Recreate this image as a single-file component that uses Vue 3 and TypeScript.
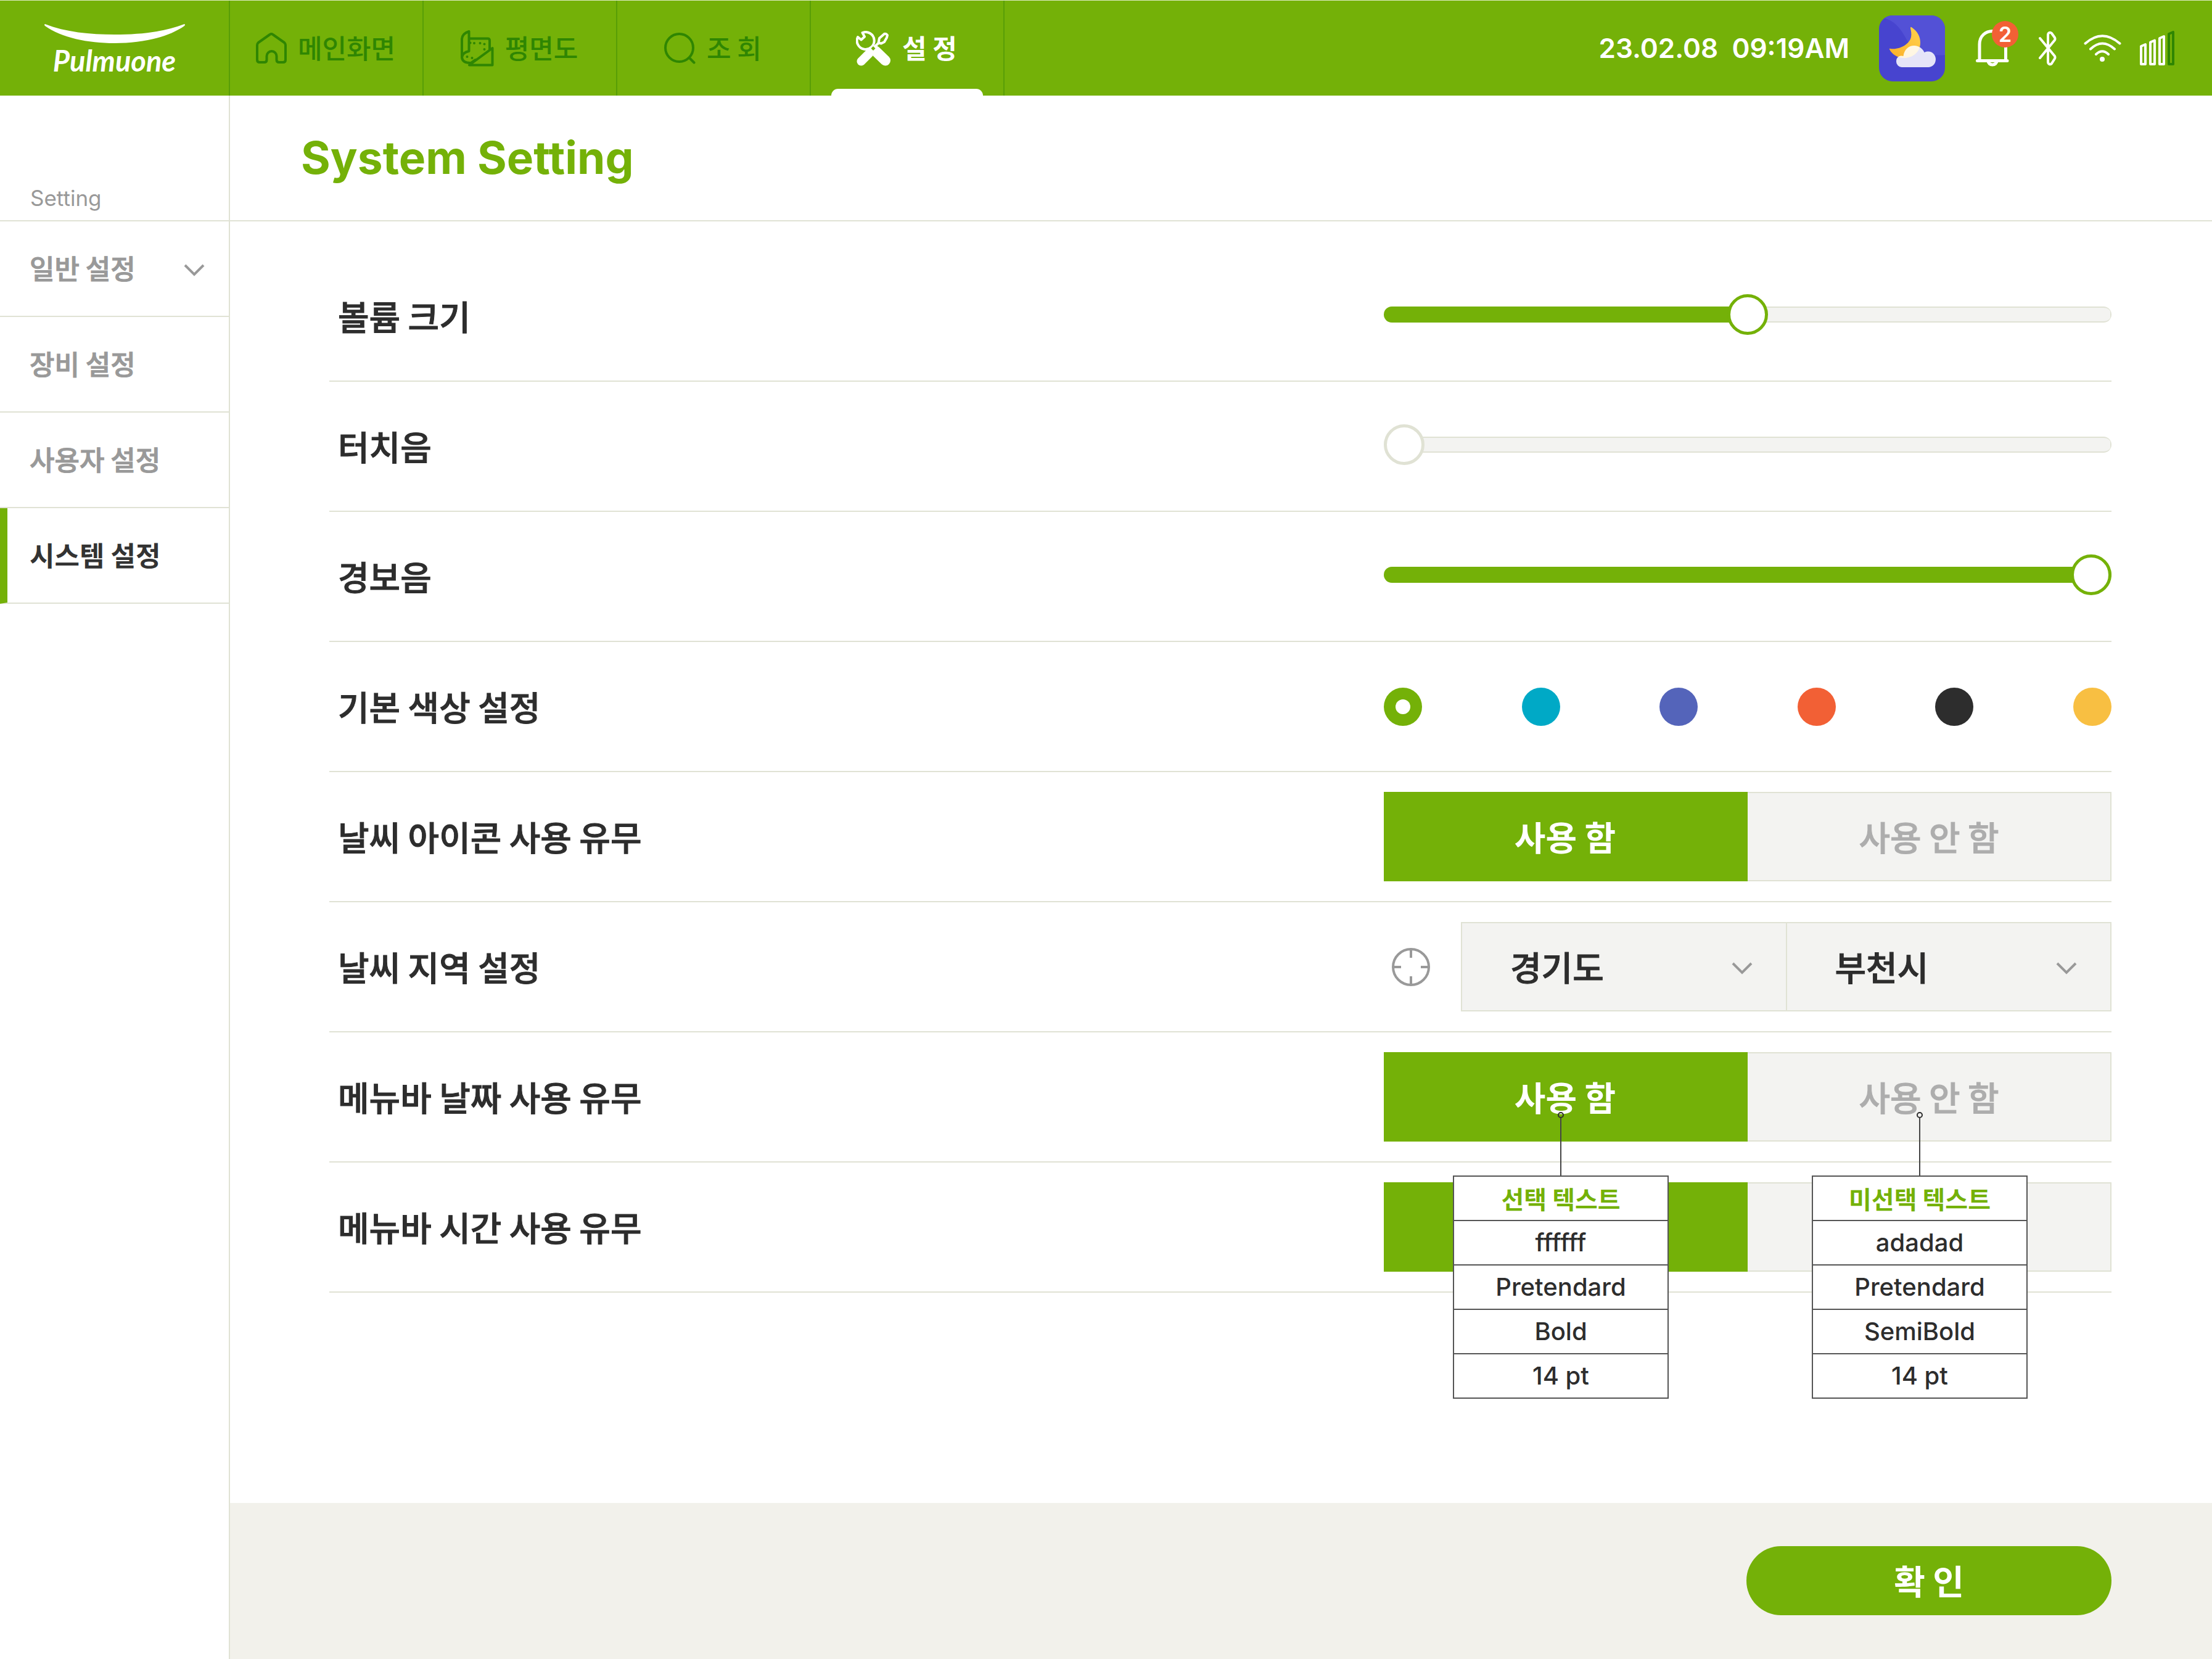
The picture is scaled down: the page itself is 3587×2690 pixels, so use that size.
<script setup lang="ts">
import { reactive, ref } from 'vue'

type Choice = 'on' | 'off'

interface SliderRow {
  id: string
  label: string
}
interface Callout {
  title: string
  specs: string[]
}

const sliders: SliderRow[] = [
  { id: 'volume', label: '볼륨 크기' },
  { id: 'touch', label: '터치음' },
  { id: 'alarm', label: '경보음' },
]
const levels = reactive<Record<string, number>>({ volume: 50, touch: 0, alarm: 100 })

const colors = ['#74b108', '#00a9c6', '#5464ba', '#f26035', '#2d2d2d', '#f8bf42']
const colorNames = ['초록', '청록', '남색', '주황', '검정', '노랑']
const color = ref(colors[0])

const choices: { value: Choice; label: string }[] = [
  { value: 'on', label: '사용 함' },
  { value: 'off', label: '사용 안 함' },
]
const toggles = reactive<Record<string, Choice>>({ weather: 'on', date: 'on', time: 'on' })

// The notes hang from the date row and cover the time row's captions.
const menubarRows = [
  { id: 'date', label: '메뉴바 날짜 사용 유무', covered: false },
  { id: 'time', label: '메뉴바 시간 사용 유무', covered: true },
]

const province = ref('경기도')
const city = ref('부천시')

const callouts: Callout[] = [
  { title: '선택 텍스트', specs: ['ffffff', 'Pretendard', 'Bold', '14 pt'] },
  { title: '미선택 텍스트', specs: ['adadad', 'Pretendard', 'SemiBold', '14 pt'] },
]

const sideItems = [
  { label: '일반 설정', expandable: true },
  { label: '장비 설정' },
  { label: '사용자 설정' },
  { label: '시스템 설정', active: true },
]
</script>

<template>
  <div class="app">
    <header class="topbar">
      <a class="logo" href="#" aria-label="Pulmuone">
        <svg class="smile" viewBox="0 0 228 31" width="228" height="31">
          <path d="M1 0C34 13 74 17 114 17S194 13 227 0q2 1 0 3C200 22 158 31 114 31S28 22 1 3q-2-2 0-3z" fill="#fff" />
        </svg>
        <span>Pulmuone</span>
      </a>
      <nav class="tabs">
        <a class="tab" href="#">
          <svg viewBox="0 0 50 50" width="50" height="50" class="line">
            <path d="M17.500 44V38a8 8 0 0 1 16 0v6q0 4 4 4H44q4 0 4-4V20q0-2-2-4L27.500 3q-2.500-2-5 0L4 16q-2 2-2 4v24q0 4 4 4h7.500q4 0 4-4z" />
          </svg>
          <span>메인화면</span>
        </a>
        <a class="tab" href="#">
          <svg viewBox="0 0 54 59" width="54" height="59" class="line">
            <path d="M2 44V14Q3 5 13.500 2V34Q3 36 2 44Q3 53 15 53M13.500 13.500H44Q47 13.500 47 17V31M51.500 29V56.500H14zM17 53L24 48" />
            <g class="dots">
              <circle cx="15.500" cy="20.500" r="2" /><circle cx="22" cy="21" r="2" /><circle cx="31.500" cy="21" r="2" />
              <circle cx="38.500" cy="22.500" r="2" /><circle cx="38.500" cy="31" r="2" />
              <circle cx="10.500" cy="43" r="2" /><circle cx="18.500" cy="45" r="2" />
            </g>
          </svg>
          <span>평면도</span>
        </a>
        <a class="tab" href="#">
          <svg viewBox="0 0 51 51" width="51" height="51" class="line">
            <circle cx="24.500" cy="24.500" r="22.500" />
            <path d="M41 41l7.500 7.500" />
          </svg>
          <span>조 회</span>
        </a>
        <a class="tab active" href="#" aria-current="page">
          <svg viewBox="0 0 57 57" width="57" height="57" class="line">
            <path d="M3 10L8.500 14.500L14 9.500L10.500 3A14 14 0 1 1 3 10z" />
            <path d="M38 12L46 5Q49 4 51 7L50 11L46 18L41 20.500L36.500 19.500zM36.500 20L30 26" />
            <path d="M25 33L8.500 49.500" stroke-width="14" />
            <path d="M32 33L47.500 48" stroke-width="17" />
            <path d="M28 23.500l5.500 5l-5.500 5.500l-5.500-5.500z" class="solid" />
            <path d="M28 25l3.500 3.500l-3.500 3.500l-3.500-3.500z" class="gap" />
            <path d="M21 60l6.500-20l8 20z" class="gap" />
          </svg>
          <span>설 정</span>
        </a>
      </nav>
      <div class="status">
        <time>23.02.08&nbsp; 09:19AM</time>
        <svg class="weather" viewBox="0 0 107 107" width="107" height="107" aria-label="구름 조금">
          <defs>
            <linearGradient id="moon" x1="1" y1="0" x2="0" y2="1">
              <stop offset="0" stop-color="#ffd34b" />
              <stop offset="1" stop-color="#fcae2a" />
            </linearGradient>
            <clipPath id="tile"><rect width="107" height="107" rx="22" /></clipPath>
          </defs>
          <g clip-path="url(#tile)">
            <rect width="107" height="107" fill="#4744cf" />
            <path d="M8 4C42 14 42 48 60 56C74 62 86 66 107 64V0H8z" fill="#5351d6" />
          </g>
          <path d="M52.500 19C63 26 67 35 67 44C67 60 54 69 41 69C30 69 21 63 17 55Q16 53 19 54C34 56 50 46 52 35C53 30 52 25 51 21Q51 18 52.500 19z" fill="url(#moon)" />
          <path d="M37 84a9 9 0 0 1-9-9V74.500a8.500 8.500 0 0 1 11.500-8.500C41 55 48 49 57 49C65 49 71 54 73.500 60C84 55 92 63 92 71C92 79 86 84 80 84z" fill="#fff" fill-opacity="0.860" />
        </svg>
        <button class="bell" type="button" aria-label="알림">
          <svg viewBox="0 0 54 60" width="54" height="60" class="line thick">
            <path d="M6 50V24C6 10 16 2.500 27 2.500S48.500 10 48.500 24V50M2.500 50.500H51M20 51a7 6 0 0 0 14 0" />
          </svg>
          <span class="badge">2</span>
        </button>
        <svg class="line bt" viewBox="0 0 29 57" width="29" height="57">
          <path d="M2 12L26 41q1 2 0 4l-5 8q-2 2-4 1q-2-1-2-4V7q0-3 2-4q2-1 4 1l5 7q1 2 0 4L2 44" />
        </svg>
        <svg class="line wifi" viewBox="0 0 61 45" width="61" height="45">
          <path d="M2.500 14.500Q30-10 58.500 14.500M11 23.500Q30 5.500 50 23.500M20 32Q30 22.500 40 32" />
          <circle cx="30" cy="40" r="4" class="solid" />
        </svg>
        <svg class="line signal" viewBox="0 0 58 56" width="58" height="56">
          <path d="M3 25l7-3v32H3zM18 18.500l7-3V54H18zM33 12l7-3v45H33z" />
          <path d="M48 5l7-3v52H48z" class="off" />
        </svg>
      </div>
    </header>

    <div class="body">
      <aside class="side">
        <h2>Setting</h2>
        <nav>
          <a v-for="item in sideItems" :key="item.label" href="#" :class="{ active: item.active }">
            <span>{{ item.label }}</span>
            <svg v-if="item.expandable" class="chevron" viewBox="0 0 34 20" width="34" height="20"><path d="M2 2l15 15L32 2" /></svg>
          </a>
        </nav>
      </aside>

      <main class="main">
        <h1>System Setting</h1>

        <form class="rows" @submit.prevent>
          <div v-for="row in sliders" :key="row.id" class="row slider-row">
            <label class="name" :for="row.id">{{ row.label }}</label>
            <input
              :id="row.id"
              v-model.number="levels[row.id]"
              class="slider"
              :class="{ empty: levels[row.id] === 0 }"
              type="range"
              min="0"
              max="100"
              :style="{ '--fill': levels[row.id] + '%' }"
            />
          </div>

          <div class="row">
            <span class="name">기본 색상 설정</span>
            <div class="palette" role="radiogroup" aria-label="기본 색상 설정">
              <input
                v-for="(c, i) in colors"
                :key="c"
                v-model="color"
                type="radio"
                name="color"
                :value="c"
                :aria-label="colorNames[i]"
                :style="{ backgroundColor: c }"
              />
            </div>
          </div>

          <div class="row">
            <span class="name">날씨 아이콘 사용 유무</span>
            <div class="segment" role="radiogroup" aria-label="날씨 아이콘 사용 유무">
              <label v-for="c in choices" :key="c.value" :class="{ on: toggles.weather === c.value }">
                <input v-model="toggles.weather" type="radio" name="weather" :value="c.value" />
                {{ c.label }}
              </label>
            </div>
          </div>

          <div class="row">
            <span class="name">날씨 지역 설정</span>
            <div class="region">
              <button class="locate" type="button" aria-label="현재 위치">
                <svg viewBox="0 0 62 62" width="62" height="62">
                  <circle cx="31" cy="31" r="29" />
                  <path d="M31 2v14M31 60V46M2 31h13M60 31H47" />
                </svg>
              </button>
              <div class="selects">
                <div class="select">
                  <select v-model="province" aria-label="시도"><option>경기도</option></select>
                  <svg class="chevron" viewBox="0 0 34 20" width="34" height="20"><path d="M2 2l15 15L32 2" /></svg>
                </div>
                <div class="select">
                  <select v-model="city" aria-label="시군구"><option>부천시</option></select>
                  <svg class="chevron" viewBox="0 0 34 20" width="34" height="20"><path d="M2 2l15 15L32 2" /></svg>
                </div>
              </div>
            </div>
          </div>

          <div v-for="row in menubarRows" :key="row.id" class="row">
            <span class="name">{{ row.label }}</span>
            <div class="segment" role="radiogroup" :aria-label="row.label">
              <label v-for="c in choices" :key="c.value" :class="{ on: toggles[row.id] === c.value }">
                <input v-model="toggles[row.id]" type="radio" :name="row.id" :value="c.value" :aria-label="c.label" />
                <template v-if="!row.covered">{{ c.label }}</template>
              </label>
              <div v-if="row.id === 'date'" class="callouts">
                <div v-for="note in callouts" :key="note.title" class="callout">
                  <i class="pin"></i>
                  <i class="stem"></i>
                  <table>
                    <thead>
                      <tr><th scope="col">{{ note.title }}</th></tr>
                    </thead>
                    <tbody>
                      <tr v-for="spec in note.specs" :key="spec"><td>{{ spec }}</td></tr>
                    </tbody>
                  </table>
                </div>
              </div>
            </div>
          </div>
        </form>

        <footer class="footer">
          <button class="confirm" type="button">확 인</button>
        </footer>
      </main>
    </div>
  </div>
</template>

<style>
body {
  margin: 0;
  background: #fff;
}
</style>

<style scoped>
.app {
  --green: #74b108;
  --deep: #2f8602;
  --rule: #e0e2d4;
  --ink: #2d2d2d;
  --mute: #999;
  --panel: #f3f3f1;
  display: flex;
  flex-direction: column;
  min-height: 100vh;
  font-family: "Noto Sans CJK KR", "Noto Sans", sans-serif;
  color: var(--ink);
}
*,
*::before,
*::after {
  box-sizing: border-box;
}
a {
  color: inherit;
  text-decoration: none;
}
button {
  padding: 0;
  border: 0;
  background: none;
  font: inherit;
  color: inherit;
}
svg {
  display: block;
  flex: none;
}
.line {
  fill: none;
  stroke: currentColor;
  stroke-width: 4;
  stroke-linecap: round;
  stroke-linejoin: round;
}
.thick {
  stroke-width: 5;
}
.line .dots,
.line .solid {
  fill: currentColor;
  stroke: none;
}
.line .gap {
  fill: var(--green);
  stroke: none;
}

/* top bar */
.topbar {
  display: flex;
  height: 155px;
  border-top: 1px solid #dcebc2;
  background: var(--green);
  color: #fff;
}
.logo {
  display: flex;
  flex-direction: column;
  align-items: center;
  width: 373px;
  padding-top: 38px;
  border-right: 2px solid #589e06;
  font: italic 700 47px/56px Lato, "Open Sans", sans-serif;
}
.tabs {
  display: flex;
}
.tab {
  position: relative;
  display: flex;
  align-items: center;
  justify-content: center;
  gap: 18px;
  width: 314px;
  padding-right: 2px;
  border-right: 2px solid #589e06;
  font-size: 43px;
  font-weight: 500;
  line-height: 60px;
  color: var(--deep);
}
.tab span,
.side a span {
  padding-bottom: 4px;
}
.tab.active {
  font-weight: 700;
  color: #fff;
}
.tab.active::after {
  content: "";
  position: absolute;
  left: 33px;
  right: 33px;
  bottom: 0;
  height: 11px;
  border-radius: 11px 11px 0 0;
  background: #fff;
}
.status {
  display: flex;
  align-items: center;
  margin-left: auto;
  padding-right: 60px;
}
.status time {
  margin-right: 48px;
  font: 600 44px/60px Inter, sans-serif;
}
.bell {
  position: relative;
  margin: 0 48px 0 50px;
}
.badge {
  position: absolute;
  top: -14px;
  left: 26px;
  width: 43px;
  height: 43px;
  border-radius: 50%;
  background: #f26035;
  font: 600 34px/43px Inter, sans-serif;
  text-align: center;
}
.wifi {
  margin: 0 29px 0 44px;
}
.signal .off {
  stroke: var(--deep);
}

/* side menu */
.body {
  display: flex;
  flex: 1;
}
.side {
  width: 373px;
  border-right: 2px solid var(--rule);
}
.side h2 {
  display: flex;
  align-items: flex-end;
  height: 204px;
  margin: 0;
  padding: 0 0 16px 49px;
  border-bottom: 2px solid var(--rule);
  font: 400 35px/40px Inter, sans-serif;
  color: var(--mute);
}
.side a {
  display: flex;
  align-items: center;
  justify-content: space-between;
  height: 155px;
  padding: 0 39px 0 48px;
  border-bottom: 2px solid var(--rule);
  font-size: 44px;
  font-weight: 500;
  line-height: 60px;
  color: var(--mute);
  -webkit-text-stroke: 1px;
}
.side a.active {
  padding-left: 36px;
  border-left: 12px solid var(--green);
  font-weight: 700;
  color: #333;
  -webkit-text-stroke: 0;
}
.chevron {
  margin-top: 4px;
  fill: none;
  stroke: var(--mute);
  stroke-width: 4;
}

/* settings */
.main {
  display: flex;
  flex: 1;
  flex-direction: column;
  min-width: 0;
}
h1 {
  height: 204px;
  margin: 0;
  padding-left: 115px;
  border-bottom: 2px solid var(--rule);
  font: 700 73px/202px Inter, sans-serif;
  color: var(--green);
}
.rows {
  flex: 1;
  padding: 49px 163px 0 161px;
}
.row {
  display: grid;
  grid-template-columns: 171fr 118fr;
  align-items: center;
  height: 211px;
  border-bottom: 2px solid var(--rule);
  font-size: 55px;
  line-height: 80px;
}
.name {
  padding: 0 0 4px 14px;
  font-weight: 500;
  -webkit-text-stroke: 1px;
}
.slider {
  width: 100%;
  height: 66px;
  margin: 0 0 6px;
  background: none;
  appearance: none;
  -webkit-appearance: none;
}
.slider::-webkit-slider-runnable-track {
  height: 26px;
  border: solid transparent;
  border-width: 2px 0;
  border-radius: 13px;
  background:
    linear-gradient(var(--green), var(--green)) left / var(--fill) 100% no-repeat border-box,
    linear-gradient(var(--panel), var(--panel)) left / calc(100% - 2px) 100% no-repeat padding-box,
    linear-gradient(var(--rule), var(--rule)) border-box;
}
.slider::-webkit-slider-thumb {
  width: 66px;
  height: 66px;
  margin-top: -22px;
  border: 5px solid var(--green);
  border-radius: 50%;
  background: #fff;
  -webkit-appearance: none;
}
.slider.empty::-webkit-slider-thumb {
  border-color: var(--rule);
}
.palette {
  display: flex;
  justify-content: space-between;
}
.palette input {
  display: grid;
  place-items: center;
  width: 62px;
  height: 62px;
  margin: 0;
  border-radius: 50%;
  appearance: none;
}
.palette input:checked::before {
  content: "";
  width: 24px;
  height: 24px;
  border-radius: 50%;
  background: #fff;
}
.segment {
  position: relative;
  display: flex;
}
.segment label {
  flex: 1;
  height: 145px;
  border: 2px solid var(--rule);
  border-left: 0;
  background: var(--panel);
  font-weight: 500;
  line-height: 138px;
  text-align: center;
  color: #adadad;
  -webkit-text-stroke: 1px;
}
.segment label.on {
  border-color: var(--green);
  background: var(--green);
  font-weight: 700;
  color: #fff;
  -webkit-text-stroke: 0;
}
.segment input {
  position: absolute;
  margin: 0;
  opacity: 0;
}
.region {
  display: flex;
  align-items: center;
  gap: 50px;
  padding-left: 13px;
}
.locate svg {
  fill: none;
  stroke: var(--mute);
  stroke-width: 4;
}
.selects {
  display: flex;
  flex: 1;
  height: 145px;
  border: 2px solid var(--rule);
  background: var(--panel);
}
.select {
  display: grid;
  flex: 1;
  align-items: center;
}
.select + .select {
  border-left: 2px solid var(--rule);
}
.select select,
.select svg {
  grid-area: 1 / 1;
}
.select select {
  height: 100%;
  padding: 0 0 4px 78px;
  border: 0;
  background: none;
  font: inherit;
  font-weight: 500;
  color: inherit;
  appearance: none;
  -webkit-text-stroke: 1px;
}
.select svg {
  justify-self: end;
  margin-right: 54px;
  pointer-events: none;
}

/* design notes over the menu-bar rows */
.callouts {
  position: absolute;
  z-index: 1;
  top: 97px;
  left: 112px;
  display: flex;
  gap: 232px;
}
.callout {
  display: flex;
  flex-direction: column;
  align-items: center;
}
.pin {
  width: 10px;
  height: 10px;
  border: 2px solid var(--ink);
  border-radius: 50%;
}
.stem {
  width: 2px;
  height: 93px;
  background: #444;
}
.callout table {
  width: 350px;
  border-collapse: collapse;
  background: #fff;
  font: 500 40px/70px Inter, "Noto Sans CJK KR", sans-serif;
  text-align: center;
}
.callout th,
.callout td {
  height: 72px;
  padding: 0;
  border: 2px solid #555;
}
.callout th {
  font-family: "Noto Sans CJK KR", sans-serif;
  font-weight: 700;
  line-height: 66px;
  color: var(--green);
}

/* footer */
.footer {
  display: flex;
  align-items: center;
  justify-content: flex-end;
  height: 253px;
  padding: 0 163px 2px 0;
  background: #f2f1eb;
}
.confirm {
  width: 592px;
  height: 112px;
  padding-bottom: 4px;
  border-radius: 56px;
  background: var(--green);
  font-size: 55px;
  font-weight: 700;
  line-height: 80px;
  color: #fff;
}
</style>
